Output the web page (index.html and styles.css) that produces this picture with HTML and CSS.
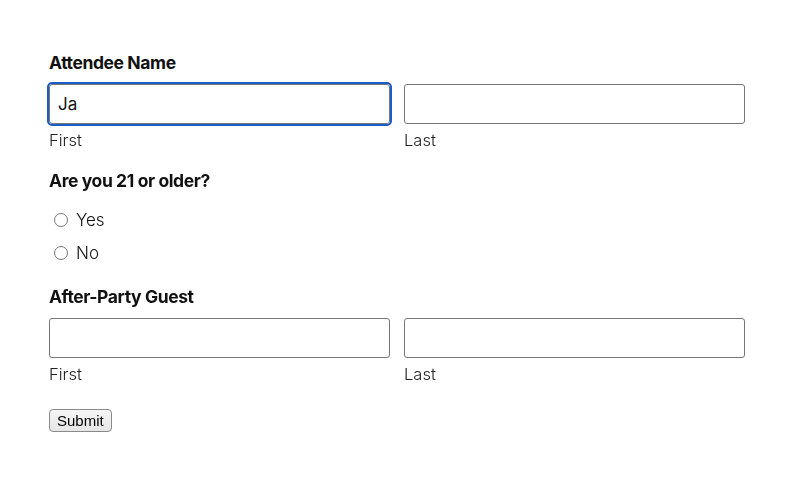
FILE: index.html
```html
<!DOCTYPE html>
<html lang="en">
<head>
    <meta charset="UTF-8">
    <meta name="viewport" content="width=device-width, initial-scale=1.0">
    <title>Event Registration</title>
    <link rel="stylesheet" href="styles.css">
</head>
<body>

<form class="rsvp-form">
    <div class="section">
        <h3 class="section-title">Attendee Name</h3>
        <div class="name-row">
            <div class="field">
                <input type="text" class="text-input is-focused" id="attendee-first" value="Ja" autofocus>
                <label for="attendee-first">First</label>
            </div>
            <div class="field">
                <input type="text" class="text-input" id="attendee-last">
                <label for="attendee-last">Last</label>
            </div>
        </div>
    </div>

    <div class="section">
        <h3 class="section-title">Are you 21 or older?</h3>
        <div class="radio-list">
            <label class="radio-option"><input type="radio" name="age" value="yes"> Yes</label>
            <label class="radio-option"><input type="radio" name="age" value="no"> No</label>
        </div>
    </div>

    <div class="section">
        <h3 class="section-title">After-Party Guest</h3>
        <div class="name-row">
            <div class="field">
                <input type="text" class="text-input" id="guest-first">
                <label for="guest-first">First</label>
            </div>
            <div class="field">
                <input type="text" class="text-input" id="guest-last">
                <label for="guest-last">Last</label>
            </div>
        </div>
    </div>

    <button type="submit" class="submit-btn">Submit</button>
</form>

</body>
</html>
```

FILE: styles.css
```css
body {
    margin: 0;
    font-family: Inter, "Noto Sans", sans-serif;
    color: #111;
    background-color: #fff;
}

.rsvp-form {
    width: 696px;
    padding: 51px 49px;
}

.section {
    margin-bottom: 18px;
}

.section-title {
    margin: 0 0 9px;
    font-size: 17.5px;
    line-height: 24px;
    font-weight: 700;
    letter-spacing: -0.4px;
}

.name-row {
    display: grid;
    grid-template-columns: 1fr 1fr;
    gap: 14px;
}

.field {
    display: flex;
    flex-direction: column;
}

.field label {
    margin-top: 5px;
    font-size: 16.5px;
    line-height: 22px;
    font-weight: 300;
    color: #222;
}

.text-input {
    box-sizing: border-box;
    height: 40px;
    padding: 0 8px;
    border: 1px solid #767676;
    border-radius: 3px;
    font-family: inherit;
    font-size: 17px;
    color: #111;
}

.text-input.is-focused,
.text-input:focus {
    outline: 2px solid #1a5cc8;
    outline-offset: 0;
}

.radio-list {
    display: flex;
    flex-direction: column;
    gap: 9px;
    margin-top: 15px;
    margin-bottom: 20px;
}

.radio-option {
    display: flex;
    align-items: center;
    font-size: 17px;
    line-height: 24px;
    font-weight: 300;
}

.radio-option input {
    width: 14px;
    height: 14px;
    margin: 0 8px 0 5px;
}

.submit-btn {
    margin-top: 6px;
    padding: 2px 7px;
    font-family: "Liberation Sans", Arial, sans-serif;
    font-size: 15px;
    background: linear-gradient(#f6f6f6, #e6e6e6);
    border: 1px solid #8a8a8a;
    border-radius: 4px;
    color: #000;
}
```
